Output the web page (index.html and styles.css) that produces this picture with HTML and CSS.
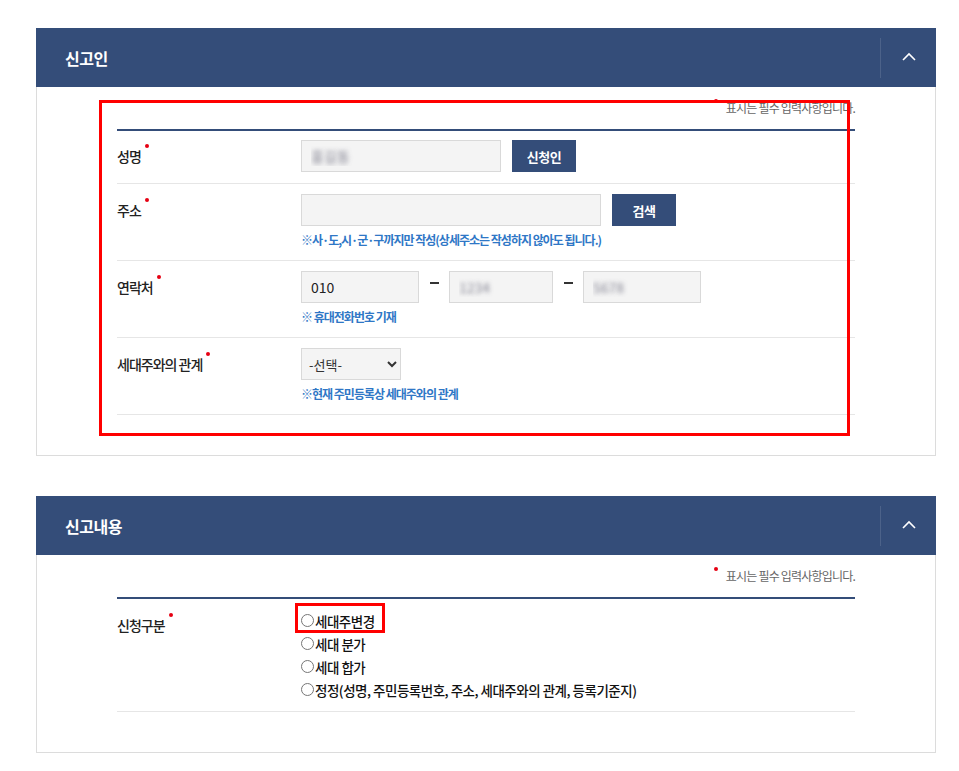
FILE: index.html
```html
<!DOCTYPE html>
<html>
	<head>
		<meta charset="UTF-8">
		<title>신고</title>
		<link rel="stylesheet" href="styles.css">
	</head>
	<body>
		<div class="wrap">
			<div class="panel">
				<div class="head">
					<h2>신고인</h2>
					<span class="toggle">
						<svg width="14" height="9" viewBox="0 0 14 9"><polyline points="1,8 7,2 13,8" fill="none" stroke="#fff" stroke-width="1.6"/></svg>
					</span>
				</div>
				<div class="body">
					<p class="note"><i class="req"></i>표시는 필수 입력사항입니다.</p>
					<div class="table">
						<div class="row">
							<div class="label">성명<i class="req"></i></div>
							<div class="field">
								<div class="line">
									<input type="text" class="inp w200 blur" value="홍길동" />
									<button class="btn">신청인</button>
								</div>
							</div>
						</div>
						<div class="row">
							<div class="label">주소<i class="req"></i></div>
							<div class="field">
								<div class="line">
									<input type="text" class="inp w300" value="" />
									<button class="btn">검색</button>
								</div>
								<p class="hint">※사·도,시·군·구까지만 작성(상세주소는 작성하지 않아도 됩니다.)</p>
							</div>
						</div>
						<div class="row">
							<div class="label">연락처<i class="req"></i></div>
							<div class="field">
								<div class="line">
									<input type="text" class="inp w118" value="010" />
									<span class="dash"><b></b></span>
									<input type="text" class="inp w104 blur" value="1234" />
									<span class="dash"><b></b></span>
									<input type="text" class="inp w118 blur" value="5678" />
								</div>
								<p class="hint">※ 휴대전화번호 기재</p>
							</div>
						</div>
						<div class="row">
							<div class="label">세대주와의 관계<i class="req"></i></div>
							<div class="field">
								<div class="line">
									<select class="sel">
										<option>-선택-</option>
										<option>본인</option>
										<option>배우자</option>
									</select>
								</div>
								<p class="hint">※현재 주민등록상 세대주와의 관계</p>
							</div>
						</div>
					</div>
				</div>
				<div class="mark mark1"></div>
			</div>

			<div class="panel">
				<div class="head">
					<h2>신고내용</h2>
					<span class="toggle">
						<svg width="14" height="9" viewBox="0 0 14 9"><polyline points="1,8 7,2 13,8" fill="none" stroke="#fff" stroke-width="1.6"/></svg>
					</span>
				</div>
				<div class="body">
					<p class="note"><i class="req"></i>표시는 필수 입력사항입니다.</p>
					<div class="table">
						<div class="row radios">
							<div class="label">신청구분<i class="req"></i></div>
							<div class="field">
								<label class="opt"><input type="radio" name="kind" />세대주변경</label>
								<label class="opt"><input type="radio" name="kind" />세대 분가</label>
								<label class="opt"><input type="radio" name="kind" />세대 합가</label>
								<label class="opt"><input type="radio" name="kind" />정정(성명, 주민등록번호, 주소, 세대주와의 관계, 등록기준지)</label>
							</div>
						</div>
					</div>
				</div>
				<div class="mark mark2"></div>
			</div>
		</div>
	</body>
</html>
```

FILE: styles.css
```css
body{
	margin: 0;
	background: #fff;
	font-family: "Noto Sans CJK KR", "Noto Sans", sans-serif;
	color: #222;
}
.wrap{
	width: 900px;
	margin-left: 36px;
	padding-top: 28px;
}
.panel{
	position: relative;
	margin-bottom: 40px;
}
.head{
	height: 59px;
	background-color: #344d79;
	display: flex;
	align-items: center;
	justify-content: space-between;
}
.head h2{
	margin: 0 0 0 29px;
	font-size: 16px;
	font-weight: bold;
	letter-spacing: -.5px;
	color: #fff;
}
.toggle{
	width: 55px;
	height: 40px;
	border-left: 1px solid rgba(255,255,255,.12);
	display: flex;
	align-items: center;
	justify-content: center;
}
.toggle svg{
	margin-top: -3px;
}
.body{
	border: 1px solid #dcdcdc;
	border-top: none;
	padding: 12px 80px 40px;
}
.note{
	margin: 0 0 13px;
	text-align: right;
	font-size: 12px;
	line-height: 16px;
	letter-spacing: -.8px;
	color: #666;
}
.note .req{
	margin: 0 8px 0 0;
	vertical-align: 10px;
}
.req{
	display: inline-block;
	width: 4px;
	height: 4px;
	border-radius: 50%;
	background-color: #e60012;
	margin-left: 4px;
	vertical-align: 14px;
}
.table{
	border-top: 2px solid #344d79;
}
.row{
	display: flex;
	border-bottom: 1px solid #e6e6e6;
	padding: 10px 0 12px;
}
.row:first-child{
	padding: 9px 0 11px;
}
.label{
	width: 184px;
	flex-shrink: 0;
	font-size: 14px;
	font-weight: 500;
	line-height: 32px;
	letter-spacing: -1px;
}
.line{
	display: flex;
	align-items: center;
}
.inp{
	height: 32px;
	box-sizing: border-box;
	border: 1px solid #d9d9d9;
	background-color: #f4f4f4;
	padding: 0 9px;
	font-family: inherit;
	font-size: 14px;
	color: #222;
	outline: none;
}
.blur{
	color: transparent;
	text-shadow: 0 0 4px rgba(90,90,110,.7);
}
.w200{ width: 200px; }
.w300{ width: 300px; }
.w118{ width: 118px; }
.w104{ width: 104px; }
.btn{
	height: 32px;
	min-width: 64px;
	margin-left: 11px;
	border: none;
	background-color: #344d79;
	color: #fff;
	font-family: inherit;
	font-size: 13px;
	font-weight: bold;
	letter-spacing: -.5px;
	padding: 0 14px;
}
.dash{
	width: 30px;
	display: flex;
	justify-content: center;
}
.dash b{
	width: 9px;
	height: 2px;
	background-color: #333;
	margin-top: -5px;
}
.sel{
	width: 100px;
	height: 32px;
	border: 1px solid #d9d9d9;
	background-color: #f4f4f4;
	font-family: inherit;
	font-size: 13px;
	color: #333;
	padding-left: 3px;
}
.hint{
	margin: 6px 0 0;
	font-size: 12px;
	line-height: 16px;
	font-weight: bold;
	letter-spacing: -1px;
	color: #2f77c6;
}
.radios.row{
	padding: 10px 0 10px;
}
.opt{
	display: flex;
	align-items: center;
	height: 23px;
	font-size: 13.5px;
	font-weight: 500;
	letter-spacing: -.5px;
	color: #111;
}
.opt input{
	width: 13px;
	height: 13px;
	margin: 0 1px 0 0;
}
.mark{
	position: absolute;
	border: 3px solid #f00;
	pointer-events: none;
}
.mark1{
	left: 63px;
	top: 72px;
	width: 745px;
	height: 330px;
}
.mark2{
	left: 259px;
	top: 107px;
	width: 84px;
	height: 24px;
}
```
